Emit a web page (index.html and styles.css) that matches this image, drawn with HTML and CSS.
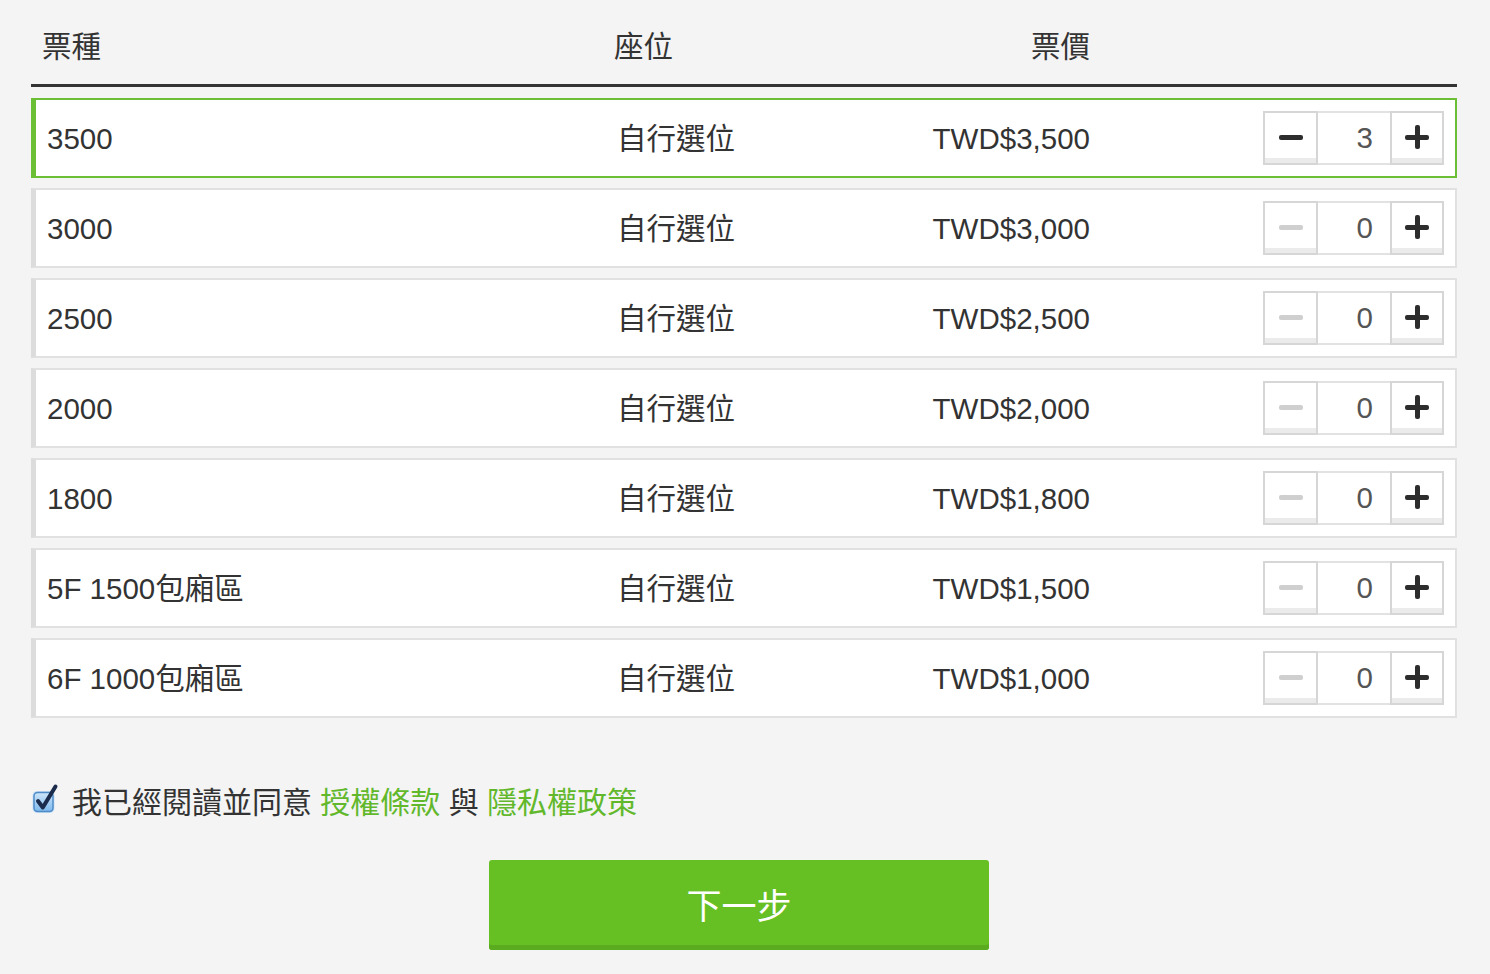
FILE: index.html
```html
<!DOCTYPE html>
<html lang="zh-Hant">
<head>
<meta charset="utf-8">
<title>票種選擇</title>
<link rel="stylesheet" href="styles.css">
</head>
<body>
<div class="page">
  <div class="ticket-table">
    <div class="thead">
      <div class="th">票種</div>
      <div class="th">座位</div>
      <div class="th th-price">票價</div>
      <div class="th"></div>
    </div>

    <div class="row row-active">
      <div class="cell">3500</div>
      <div class="cell">自行選位</div>
      <div class="cell cell-price">TWD$3,500</div>
      <div class="cell cell-qty">
        <div class="qty">
          <button class="qty-btn"><span class="minus"></span></button>
          <div class="qty-val">3</div>
          <button class="qty-btn"><span class="plus"></span></button>
        </div>
      </div>
    </div>

    <div class="row">
      <div class="cell">3000</div>
      <div class="cell">自行選位</div>
      <div class="cell cell-price">TWD$3,000</div>
      <div class="cell cell-qty">
        <div class="qty">
          <button class="qty-btn"><span class="minus disabled"></span></button>
          <div class="qty-val">0</div>
          <button class="qty-btn"><span class="plus"></span></button>
        </div>
      </div>
    </div>

    <div class="row">
      <div class="cell">2500</div>
      <div class="cell">自行選位</div>
      <div class="cell cell-price">TWD$2,500</div>
      <div class="cell cell-qty">
        <div class="qty">
          <button class="qty-btn"><span class="minus disabled"></span></button>
          <div class="qty-val">0</div>
          <button class="qty-btn"><span class="plus"></span></button>
        </div>
      </div>
    </div>

    <div class="row">
      <div class="cell">2000</div>
      <div class="cell">自行選位</div>
      <div class="cell cell-price">TWD$2,000</div>
      <div class="cell cell-qty">
        <div class="qty">
          <button class="qty-btn"><span class="minus disabled"></span></button>
          <div class="qty-val">0</div>
          <button class="qty-btn"><span class="plus"></span></button>
        </div>
      </div>
    </div>

    <div class="row">
      <div class="cell">1800</div>
      <div class="cell">自行選位</div>
      <div class="cell cell-price">TWD$1,800</div>
      <div class="cell cell-qty">
        <div class="qty">
          <button class="qty-btn"><span class="minus disabled"></span></button>
          <div class="qty-val">0</div>
          <button class="qty-btn"><span class="plus"></span></button>
        </div>
      </div>
    </div>

    <div class="row">
      <div class="cell">5F 1500包廂區</div>
      <div class="cell">自行選位</div>
      <div class="cell cell-price">TWD$1,500</div>
      <div class="cell cell-qty">
        <div class="qty">
          <button class="qty-btn"><span class="minus disabled"></span></button>
          <div class="qty-val">0</div>
          <button class="qty-btn"><span class="plus"></span></button>
        </div>
      </div>
    </div>

    <div class="row">
      <div class="cell">6F 1000包廂區</div>
      <div class="cell">自行選位</div>
      <div class="cell cell-price">TWD$1,000</div>
      <div class="cell cell-qty">
        <div class="qty">
          <button class="qty-btn"><span class="minus disabled"></span></button>
          <div class="qty-val">0</div>
          <button class="qty-btn"><span class="plus"></span></button>
        </div>
      </div>
    </div>
  </div>

  <div class="agree">
    <svg class="checkbox" width="28" height="34" viewBox="0 0 28 34">
      <defs>
        <linearGradient id="cbg" x1="0" y1="0" x2="0" y2="1">
          <stop offset="0" stop-color="#cfe6fa"/>
          <stop offset="1" stop-color="#7db8ec"/>
        </linearGradient>
      </defs>
      <rect x="1.5" y="9" width="22" height="22" rx="4.5" fill="#a9d2f5" opacity="0.55"/>
      <rect x="3" y="10.5" width="19" height="19" rx="3.5" fill="url(#cbg)" stroke="#4f8cc8" stroke-width="1.5"/>
      <path d="M7 19 L11.8 25.5 L24.5 4.5" fill="none" stroke="#1b2b4b" stroke-width="4" stroke-linecap="round" stroke-linejoin="round"/>
    </svg>
    <span class="agree-text">我已經閱讀並同意 <a class="link">授權條款</a> 與 <a class="link">隱私權政策</a></span>
  </div>

  <div class="actions">
    <button class="next-btn">下一步</button>
  </div>
</div>
</body>
</html>
```

FILE: styles.css
```css
* {
  box-sizing: border-box;
}

html, body {
  margin: 0;
  padding: 0;
  background: #f4f4f4;
}

body {
  font-family: "Liberation Sans", "Noto Sans CJK TC", sans-serif;
  color: #333;
  font-size: 29.5px;
}

.page {
  width: 1490px;
  padding-left: 31px;
}

.ticket-table {
  width: 1426px;
}

.thead {
  display: grid;
  grid-template-columns: 572px 275px 223px 1fr;
  height: 87px;
  padding-top: 29px;
  border-bottom: 3px solid #333;
  margin-bottom: 11px;
}

.th {
  padding: 0 11px;
  line-height: 35px;
  color: #333;
}

.th-price {
  text-align: right;
}

.row {
  display: grid;
  grid-template-columns: 570px 270px 225px 1fr;
  align-items: center;
  height: 80px;
  background: #fff;
  border: 2px solid #e1e1e1;
  border-left: 5px solid #dcdcdc;
  margin-bottom: 10px;
}

.row-active {
  border-color: #6abf35;
}

.cell {
  padding: 0 11px;
  line-height: 35px;
  white-space: nowrap;
}

.cell-price {
  text-align: right;
}

.cell-qty {
  display: flex;
  justify-content: flex-end;
}

.qty {
  display: flex;
  height: 54px;
}

.qty-btn {
  width: 55px;
  height: 54px;
  padding: 0;
  margin: 0;
  background: #fff;
  border: 2px solid #d6d6d6;
  box-shadow: inset 0 -5px 0 #ebebeb;
  display: flex;
  align-items: center;
  justify-content: center;
  position: relative;
}

.qty-btn:last-child {
  width: 54px;
}

.qty-val {
  width: 72px;
  height: 54px;
  border-top: 2px solid #e2e2e2;
  border-bottom: 2px solid #e2e2e2;
  background: #fff;
  text-align: right;
  padding-right: 17px;
  line-height: 50px;
  color: #555;
  font-size: 29.5px;
}

.minus {
  display: block;
  width: 24px;
  height: 5px;
  border-radius: 2px;
  background: #2d2d2d;
  margin-top: -2px;
}

.minus.disabled {
  background: #cfcfcf;
}

.plus {
  display: block;
  width: 24px;
  height: 24px;
  position: relative;
  margin-top: -2px;
}

.plus::before,
.plus::after {
  content: "";
  position: absolute;
  background: #2d2d2d;
  border-radius: 2px;
}

.plus::before {
  left: 0;
  top: 9.5px;
  width: 24px;
  height: 5px;
}

.plus::after {
  left: 9.5px;
  top: 0;
  width: 5px;
  height: 24px;
}

.agree {
  display: flex;
  align-items: center;
  margin-top: 59px;
  height: 50px;
}

.checkbox {
  display: block;
  margin-left: 0;
  margin-top: -6px;
}

.agree-text {
  margin-left: 13px;
  line-height: 35px;
  font-size: 30px;
  color: #333;
}

.link {
  color: #62b82b;
  text-decoration: none;
}

.actions {
  padding-left: 458px;
  margin-top: 33px;
}

.next-btn {
  width: 500px;
  height: 90px;
  border: none;
  border-radius: 3px;
  background: #67c023;
  box-shadow: inset 0 -5px 0 #5aab1f;
  color: #fff;
  font-family: "Liberation Sans", "Noto Sans CJK TC", sans-serif;
  font-size: 35px;
  padding: 0 0 4px 0;
}
```
